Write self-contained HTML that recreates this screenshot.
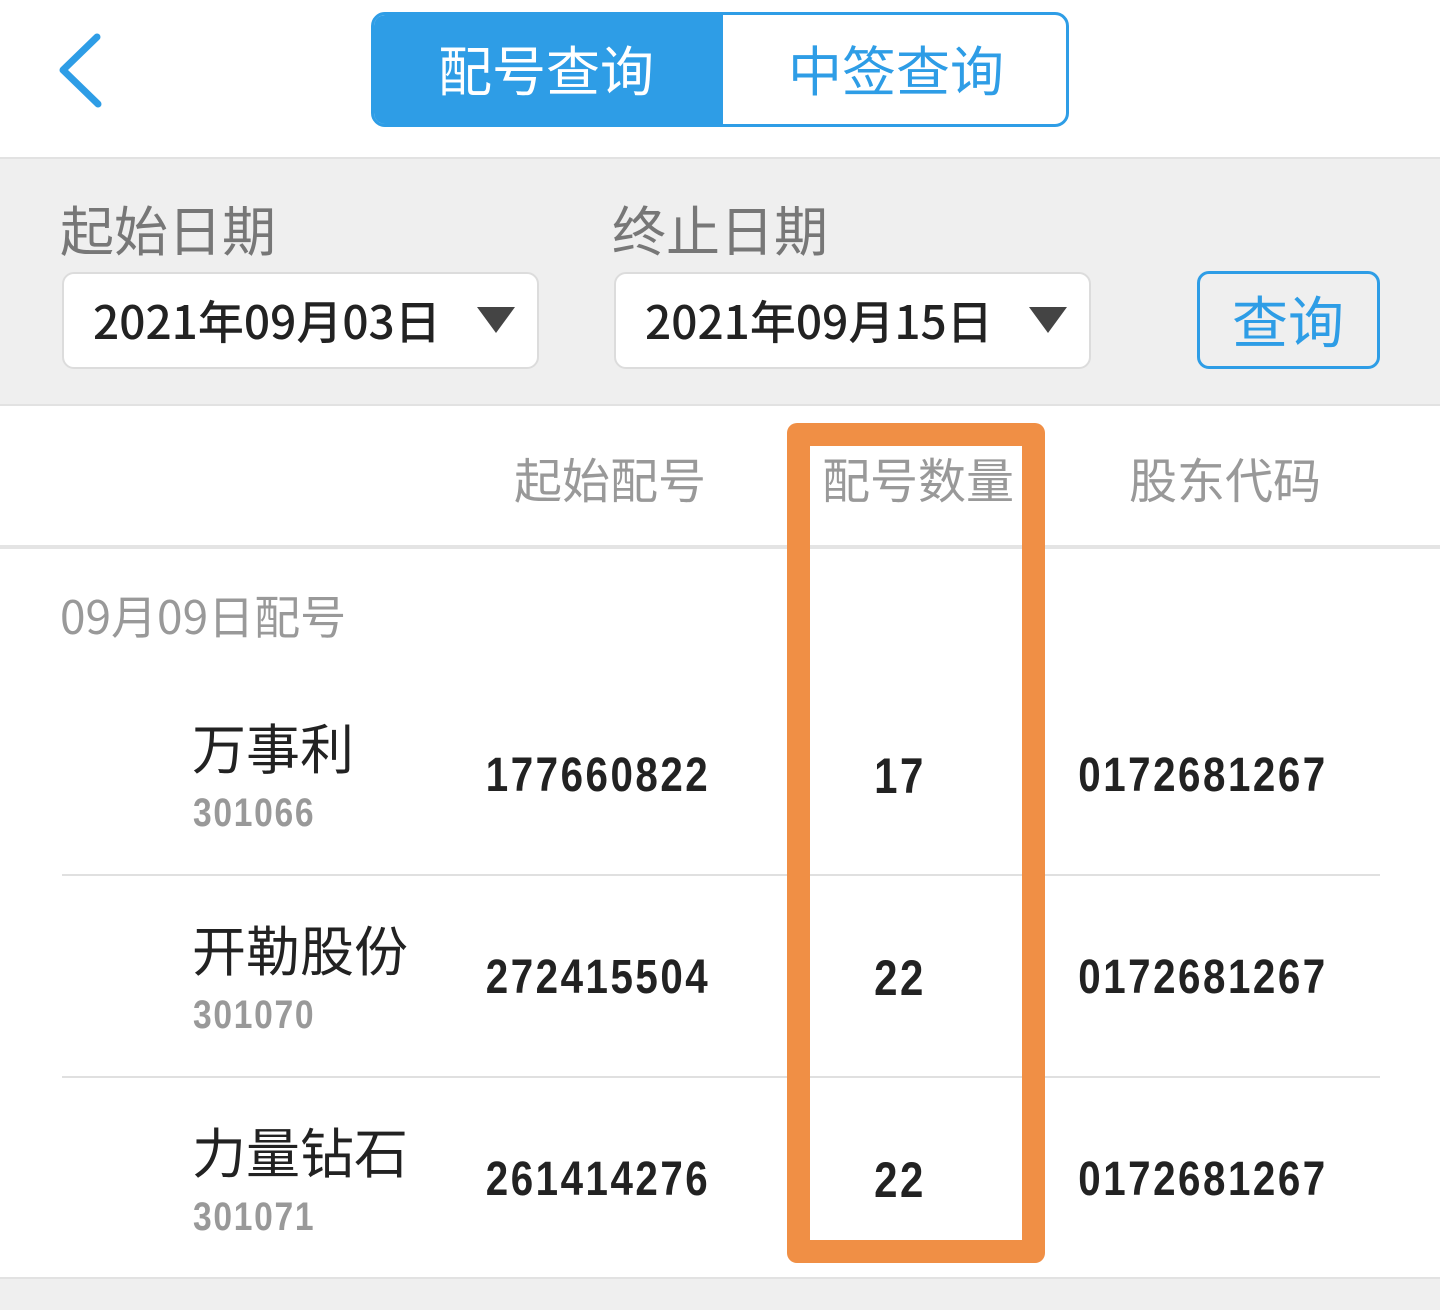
<!DOCTYPE html>
<html><head><meta charset="utf-8">
<style>
*{margin:0;padding:0;box-sizing:border-box}
body{width:1440px;height:1310px;background:#fff;position:relative;overflow:hidden;font-family:"Liberation Sans","Noto Sans CJK SC",sans-serif}
.a{position:absolute}
.cjk{font-family:"Noto Sans CJK SC","WenQuanYi Zen Hei",sans-serif}
.c{position:absolute;transform:translateX(-50%);white-space:nowrap}
.n{display:inline-block;font-family:"Liberation Sans",sans-serif;font-weight:bold;transform:scaleX(.84);letter-spacing:3px;color:#222;white-space:nowrap}
.hl{background:#e0e0e0;height:2px;position:absolute}
</style></head><body>
<svg class="a" style="left:50px;top:28px" width="60" height="86" viewBox="0 0 60 86"><path d="M47 9 L13 42 L48 76" fill="none" stroke="#2e9de6" stroke-width="7" stroke-linecap="round" stroke-linejoin="round"/></svg>
<div class="a" style="left:371px;top:12px;width:698px;height:115px;border:3px solid #2e9de6;border-radius:14px;overflow:hidden">
 <div class="a" style="left:0;top:0;width:349px;height:109px;background:#2e9de6"></div>
 <div class="c cjk" style="left:172px;top:20px;font-size:54px;line-height:66px;color:#fff">配号查询</div>
 <div class="c cjk" style="left:522px;top:20px;font-size:54px;line-height:66px;color:#2e9de6">中签查询</div>
</div>
<div class="a" style="left:0;top:157px;width:1440px;height:249px;background:#efefef;border-top:2px solid #e2e2e2;border-bottom:2px solid #e2e2e2"></div>
<div class="a cjk" style="left:60px;top:195px;font-size:54px;line-height:66px;color:#777">起始日期</div>
<div class="a cjk" style="left:612px;top:195px;font-size:54px;line-height:66px;color:#777">终止日期</div>
<div class="a" style="left:62px;top:272px;width:477px;height:97px;background:#fff;border:2px solid #dcdcdc;border-radius:12px"></div>
<div class="a" style="left:614px;top:272px;width:477px;height:97px;background:#fff;border:2px solid #dcdcdc;border-radius:12px"></div>
<div class="a cjk" style="left:93px;top:290px;font-size:46px;line-height:60px;color:#222;font-weight:500">2021年09月03日</div>
<div class="a cjk" style="left:645px;top:290px;font-size:46px;line-height:60px;color:#222;font-weight:500">2021年09月15日</div>
<svg class="a" style="left:476px;top:306px" width="40" height="28"><path d="M1 1H39L20 27Z" fill="#444"/></svg>
<svg class="a" style="left:1028px;top:306px" width="40" height="28"><path d="M1 1H39L20 27Z" fill="#444"/></svg>
<div class="a" style="left:1197px;top:271px;width:183px;height:98px;border:3px solid #2e9de6;border-radius:12px"></div>
<div class="c cjk" style="left:1288px;top:286px;font-size:56px;line-height:68px;color:#2e9de6">查询</div>
<div class="c cjk" style="left:610px;top:446px;font-size:48px;line-height:62px;color:#999">起始配号</div>
<div class="c cjk" style="left:918px;top:446px;font-size:48px;line-height:62px;color:#999">配号数量</div>
<div class="c cjk" style="left:1225px;top:446px;font-size:48px;line-height:62px;color:#999">股东代码</div>
<div class="hl" style="left:0;top:545px;width:1440px;height:4px;background:#e4e4e4"></div>
<div class="a cjk" style="left:60px;top:586px;font-size:46px;line-height:58px;color:#999">09月09日配号</div>

<div class="a cjk" style="left:192px;top:713px;font-size:54px;line-height:66px;color:#222">万事利</div>
<div class="a" style="left:193px;top:789px;font-size:40px;line-height:48px"><span class="n" style="color:#999;transform-origin:left;letter-spacing:2px">301066</span></div>
<div class="c" style="left:598px;top:748px;font-size:48px;line-height:56px"><span class="n">177660822</span></div>
<div class="c" style="left:900px;top:748px;font-size:50px;line-height:56px"><span class="n">17</span></div>
<div class="c" style="left:1203px;top:748px;font-size:48px;line-height:56px"><span class="n">0172681267</span></div>
<div class="hl" style="left:62px;top:874px;width:1318px"></div>

<div class="a cjk" style="left:192px;top:915px;font-size:54px;line-height:66px;color:#222">开勒股份</div>
<div class="a" style="left:193px;top:991px;font-size:40px;line-height:48px"><span class="n" style="color:#999;transform-origin:left;letter-spacing:2px">301070</span></div>
<div class="c" style="left:598px;top:950px;font-size:48px;line-height:56px"><span class="n">272415504</span></div>
<div class="c" style="left:900px;top:950px;font-size:50px;line-height:56px"><span class="n">22</span></div>
<div class="c" style="left:1203px;top:950px;font-size:48px;line-height:56px"><span class="n">0172681267</span></div>
<div class="hl" style="left:62px;top:1076px;width:1318px"></div>

<div class="a cjk" style="left:192px;top:1117px;font-size:54px;line-height:66px;color:#222">力量钻石</div>
<div class="a" style="left:193px;top:1193px;font-size:40px;line-height:48px"><span class="n" style="color:#999;transform-origin:left;letter-spacing:2px">301071</span></div>
<div class="c" style="left:598px;top:1152px;font-size:48px;line-height:56px"><span class="n">261414276</span></div>
<div class="c" style="left:900px;top:1152px;font-size:50px;line-height:56px"><span class="n">22</span></div>
<div class="c" style="left:1203px;top:1152px;font-size:48px;line-height:56px"><span class="n">0172681267</span></div>

<div class="a" style="left:0;top:1277px;width:1440px;height:33px;background:#efefef;border-top:2px solid #e2e2e2"></div>
<div class="a" style="left:787px;top:423px;width:258px;height:840px;border:23px solid #f08f45;border-radius:10px"></div>
</body></html>
